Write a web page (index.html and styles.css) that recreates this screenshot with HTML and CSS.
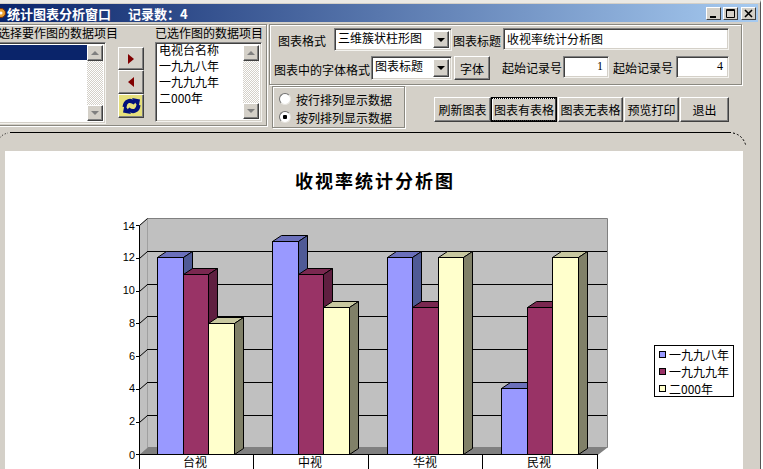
FILE: index.html
```html
<!DOCTYPE html>
<html lang="zh-CN">
<head>
    <meta charset="UTF-8">
    <title>统计图表分析窗口</title>
    <link rel="stylesheet" href="styles.css">
</head>
<body>
    <div id="window">
        <div id="titlebar">
            <svg class="app-icon" width="6" height="12" viewBox="0 0 6 12">
                <circle cx="1" cy="6" r="4.5" fill="#e8a030" stroke="#803000"/>
                <circle cx="1" cy="6" r="1.5" fill="#fff"/>
            </svg>
            <span class="title-text">统计图表分析窗口</span>
            <span class="title-count">记录数：4</span>
            <div class="win-btns">
                <div class="win-btn"><svg width="13" height="11" viewBox="0 0 13 11"><rect x="3" y="8" width="6" height="2"/></svg></div>
                <div class="win-btn"><svg width="13" height="11" viewBox="0 0 13 11"><path d="M2.5 1.5h8v8h-8z M2 2.5h9" fill="none" stroke="#000"/></svg></div>
                <div class="win-btn close-btn"><svg width="13" height="11" viewBox="0 0 13 11"><path d="M3 2l7 7M10 2l-7 7" stroke="#000" stroke-width="1.6"/></svg></div>
            </div>
        </div>

        <div id="toolbar">
            <div class="group left-group">
                <div class="list-col first-col">
                    <div class="field-label">选择要作图的数据项目</div>
                    <div class="listbox first-list">
                        <div class="list-items">
                            <div class="list-row selected"></div>
                        </div>
                        <div class="scrollbar">
                            <div class="scroll-btn"><i class="tri-up"></i></div>
                            <div class="scroll-btn"><i class="tri-down"></i></div>
                        </div>
                    </div>
                </div>

                <div class="move-btns">
                    <button class="btn move-btn"><i class="tri-right"></i></button>
                    <button class="btn move-btn tall"><i class="tri-left"></i></button>
                    <button class="btn move-btn tall swap-btn">
                        <svg width="19" height="16" viewBox="0 0 19 16">
                            <path d="M2.5 9C3 3 8 1 13 5" fill="none" stroke="#00107c" stroke-width="4"/>
                            <path d="M10 0l8 1.500-1.500 8z" fill="#00107c"/>
                            <path d="M16.500 7C16 13 11 15 6 11" fill="none" stroke="#00107c" stroke-width="4"/>
                            <path d="M9 16l-8-1.500 1.500-8z" fill="#00107c"/>
                        </svg>
                    </button>
                </div>

                <div class="list-col second-col">
                    <div class="field-label">已选作图的数据项目</div>
                    <div class="listbox second-list">
                        <div class="list-items">
                            <div class="list-row">电视台名称</div>
                            <div class="list-row">一九九八年</div>
                            <div class="list-row">一九九九年</div>
                            <div class="list-row">二000年</div>
                        </div>
                        <div class="scrollbar">
                            <div class="scroll-btn"><i class="tri-up"></i></div>
                            <div class="scroll-btn"><i class="tri-down"></i></div>
                        </div>
                    </div>
                </div>
            </div>

            <div class="right-col">
                <div class="group options-group">
                    <div class="opt-row">
                        <span class="opt-label l1">图表格式</span>
                        <div class="combo c1"><span class="combo-text">三维簇状柱形图</span><div class="combo-btn"><i class="tri-down black"></i></div></div>
                        <span class="opt-label l2">图表标题</span>
                        <div class="textbox t1">收视率统计分析图</div>
                    </div>
                    <div class="opt-row">
                        <span class="opt-label l3">图表中的字体格式</span>
                        <div class="combo c2"><span class="combo-text">图表标题</span><div class="combo-btn"><i class="tri-down black"></i></div></div>
                        <button class="btn font-btn">字体</button>
                        <span class="opt-label l4">起始记录号</span>
                        <div class="textbox num n1">1</div>
                        <span class="opt-label l5">起始记录号</span>
                        <div class="textbox num n2">4</div>
                    </div>
                </div>

                <div class="action-row">
                    <div class="group radio-group">
                        <label class="radio-line"><span class="radio"></span>按行排列显示数据</label>
                        <label class="radio-line"><span class="radio checked"></span>按列排列显示数据</label>
                    </div>
                    <div class="action-btns">
                        <button class="btn a1">刷新图表</button>
                        <button class="btn a2 focused"><span>图表有表格</span></button>
                        <button class="btn a3">图表无表格</button>
                        <button class="btn a4">预览打印</button>
                        <button class="btn a5">退出</button>
                    </div>
                </div>
            </div>
        </div>

        <div id="divider"></div>
        <svg id="corners" width="763" height="20" viewBox="0 0 763 20">
            <path d="M0 8.5Q3 5 8 4" fill="none" stroke="#000" stroke-dasharray="1 2"/>
            <path d="M733 4Q743 6 746 17" fill="none" stroke="#000" stroke-dasharray="2 2"/>
        </svg>

        <div id="sheet">
            <div id="chart-title">收视率统计分析图</div>
            <svg id="chart" width="738" height="278" viewBox="5 191 738 278">
                <!-- walls -->
                <polygon class="wall" points="147.5,218.5 607.5,218.5 607.5,447.5 147.5,447.5"/>
                <polygon class="wall" points="139.5,225.5 147.5,218.5 147.5,447.5 139.5,454.5"/>
                <polygon class="floor" points="139.5,454.5 147.5,447.5 607.5,447.5 598.5,454.5"/>

                <!-- grid lines -->
                <path class="grid" d="M147 251.5H607M147 284.5H607M147 316.5H607M147 349.5H607M147 382.5H607M147 415.5H607"/>
                <path class="grid soft" d="M136 225.5H139.5L147.5 218.5M136 258.5H139.5L147.5 251.5M136 291.5H139.5L147.5 284.5M136 323.5H139.5L147.5 316.5M136 356.5H139.5L147.5 349.5M136 389.5H139.5L147.5 382.5M136 422.5H139.5L147.5 415.5M136 454.5H139.5"/>

                <text class="axis-num" x="135" y="226">14</text>
                <text class="axis-num" x="135" y="257">12</text>
                <text class="axis-num" x="135" y="290">10</text>
                <text class="axis-num" x="135" y="323">8</text>
                <text class="axis-num" x="135" y="356">6</text>
                <text class="axis-num" x="135" y="388">4</text>
                <text class="axis-num" x="135" y="421">2</text>
                <text class="axis-num" x="135" y="455">0</text>

                <!-- 台视 -->
                <g class="s1">
                    <polygon class="top" points="157.5,257.5 166.5,251.5 192.5,251.5 183.5,257.5"/>
                    <polygon class="side" points="183.5,257.5 192.5,251.5 192.5,448.5 183.5,454.5"/>
                    <rect class="front" x="157.5" y="257.5" width="26" height="197"/>
                </g>
                <g class="s2">
                    <polygon class="top" points="183.5,274.5 192.5,268.5 217.5,268.5 208.5,274.5"/>
                    <polygon class="side" points="208.5,274.5 217.5,268.5 217.5,448.5 208.5,454.5"/>
                    <rect class="front" x="183.5" y="274.5" width="25" height="180"/>
                </g>
                <g class="s3">
                    <polygon class="top" points="208.5,323.5 217.5,317.5 243.5,317.5 234.5,323.5"/>
                    <polygon class="side" points="234.5,323.5 243.5,317.5 243.5,448.5 234.5,454.5"/>
                    <rect class="front" x="208.5" y="323.5" width="26" height="131"/>
                </g>

                <!-- 中视 -->
                <g class="s1">
                    <polygon class="top" points="272.5,241.5 281.5,235.5 307.5,235.5 298.5,241.5"/>
                    <polygon class="side" points="298.5,241.5 307.5,235.5 307.5,448.5 298.5,454.5"/>
                    <rect class="front" x="272.5" y="241.5" width="26" height="213"/>
                </g>
                <g class="s2">
                    <polygon class="top" points="298.5,274.5 307.5,268.5 332.5,268.5 323.5,274.5"/>
                    <polygon class="side" points="323.5,274.5 332.5,268.5 332.5,448.5 323.5,454.5"/>
                    <rect class="front" x="298.5" y="274.5" width="25" height="180"/>
                </g>
                <g class="s3">
                    <polygon class="top" points="323.5,307.5 332.5,301.5 358.5,301.5 349.5,307.5"/>
                    <polygon class="side" points="349.5,307.5 358.5,301.5 358.5,448.5 349.5,454.5"/>
                    <rect class="front" x="323.5" y="307.5" width="26" height="147"/>
                </g>

                <!-- 华视 -->
                <g class="s1">
                    <polygon class="top" points="387.5,257.5 396.5,251.5 421.5,251.5 412.5,257.5"/>
                    <polygon class="side" points="412.5,257.5 421.5,251.5 421.5,448.5 412.5,454.5"/>
                    <rect class="front" x="387.5" y="257.5" width="25" height="197"/>
                </g>
                <g class="s2">
                    <polygon class="top" points="412.5,307.5 421.5,301.5 447.5,301.5 438.5,307.5"/>
                    <polygon class="side" points="438.5,307.5 447.5,301.5 447.5,448.5 438.5,454.5"/>
                    <rect class="front" x="412.5" y="307.5" width="26" height="147"/>
                </g>
                <g class="s3">
                    <polygon class="top" points="438.5,257.5 447.5,251.5 472.5,251.5 463.5,257.5"/>
                    <polygon class="side" points="463.5,257.5 472.5,251.5 472.5,448.5 463.5,454.5"/>
                    <rect class="front" x="438.5" y="257.5" width="25" height="197"/>
                </g>

                <!-- 民视 -->
                <g class="s1">
                    <polygon class="top" points="501.5,388.5 510.5,382.5 536.5,382.5 527.5,388.5"/>
                    <polygon class="side" points="527.5,388.5 536.5,382.5 536.5,448.5 527.5,454.5"/>
                    <rect class="front" x="501.5" y="388.5" width="26" height="66"/>
                </g>
                <g class="s2">
                    <polygon class="top" points="527.5,307.5 536.5,301.5 561.5,301.5 552.5,307.5"/>
                    <polygon class="side" points="552.5,307.5 561.5,301.5 561.5,448.5 552.5,454.5"/>
                    <rect class="front" x="527.5" y="307.5" width="25" height="147"/>
                </g>
                <g class="s3">
                    <polygon class="top" points="552.5,257.5 561.5,251.5 587.5,251.5 578.5,257.5"/>
                    <polygon class="side" points="578.5,257.5 587.5,251.5 587.5,448.5 578.5,454.5"/>
                    <rect class="front" x="552.5" y="257.5" width="26" height="197"/>
                </g>

                <!-- axis and data table head -->
                <path class="grid" d="M139.5 225.5V469M139 454.5H598M253.5 454.5V469M368.5 454.5V469M482.5 454.5V469M597.5 454.5V469"/>
                <text class="cat" x="195" y="461.5">台视</text>
                <text class="cat" x="310" y="461.5">中视</text>
                <text class="cat" x="425" y="461.5">华视</text>
                <text class="cat" x="539" y="461.5">民视</text>

                <!-- legend -->
                <rect class="legend-box" x="654.5" y="345.5" width="79" height="51"/>
                <g class="s1"><rect class="front" x="659.5" y="351.5" width="6" height="6"/></g>
                <g class="s2"><rect class="front" x="659.5" y="368.5" width="6" height="6"/></g>
                <g class="s3"><rect class="front" x="659.5" y="385.5" width="6" height="6"/></g>
                <text class="legend-text" x="669" y="354.5">一九九八年</text>
                <text class="legend-text" x="669" y="371.5">一九九九年</text>
                <text class="legend-text" x="669" y="388.5">二000年</text>
            </svg>
        </div>
    </div>
</body>
</html>
```

FILE: styles.css
```css
html, body{
    margin: 0;
    height: 100%;
    overflow: hidden;
    background: #fff;
}
body, button{
    font-family: "Noto Sans CJK SC", "Liberation Sans", sans-serif;
    font-size: 12px;
    color: #000;
}
#window{
    position: relative;
    box-sizing: border-box;
    width: 761px;
    height: 469px;
    display: flex;
    flex-direction: column;
    background: #d4d0c8;
    border-top: 3px solid #ebe9e4;
    border-right: 1px solid #555;
    padding-top: 1px;
    overflow: hidden;
}

/* title bar */
#titlebar{
    flex: none;
    height: 18px;
    margin-right: 2px;
    display: flex;
    align-items: center;
    background: linear-gradient(90deg, #0a246a, #a6caf0);
    color: #fff;
    font-weight: bold;
    font-size: 13px;
}
.title-text{
    margin-left: 1px;
}
.title-count{
    margin-left: 17px;
}
.win-btns{
    margin-left: auto;
    margin-right: 2px;
    display: flex;
    gap: 2px;
}
.win-btn{
    box-sizing: border-box;
    width: 15px;
    height: 13px;
    background: #d4d0c8;
    border: 1px solid;
    border-color: #fff #404040 #404040 #fff;
    display: flex;
}
.close-btn{
    margin-left: 1px;
}

/* shared bevels */
.group{
    box-sizing: border-box;
    border: 1px solid #8a8880;
    box-shadow: 1px 1px 0 #fff, inset 1px 1px 0 #fff;
}
.btn, .scroll-btn, .combo-btn{
    box-sizing: border-box;
    background: #d4d0c8;
    border: 1px solid;
    border-color: #fff #404040 #404040 #fff;
    box-shadow: inset -1px -1px 0 #808080;
    padding: 0;
    display: flex;
    align-items: center;
    justify-content: center;
}
.listbox, .combo, .textbox{
    box-sizing: border-box;
    background: #fff;
    border: 1px solid;
    border-color: #808080 #f4f3ef #f4f3ef #808080;
    box-shadow: inset 1px 1px 0 #404040, inset -1px -1px 0 #d4d0c8;
}

/* small triangles */
i{
    display: block;
    width: 0;
    height: 0;
    border: solid transparent;
}
.tri-up{
    border-width: 0 4px 4px;
    border-bottom-color: #808080;
}
.tri-down{
    border-width: 4px 4px 0;
    border-top-color: #808080;
}
.tri-down.black{
    border-top-color: #000;
}
.tri-right{
    border-width: 5px 0 5px 6px;
    border-left-color: #800000;
}
.tri-left{
    border-width: 5px 6px 5px 0;
    border-right-color: #800000;
}

/* top panel */
#toolbar{
    flex: none;
    display: flex;
    height: 104px;
    margin-top: 2px;
}
.left-group{
    flex: none;
    display: flex;
    width: 271px;
    height: 102px;
    margin-left: -4px;
}
.field-label{
    height: 17px;
    line-height: 16px;
    white-space: nowrap;
}
.first-col{
    width: 109px;
}
.first-col .field-label{
    margin-left: 1px;
}
.second-col{
    width: 107px;
    margin-left: 11px;
}
.listbox{
    display: flex;
    padding: 2px;
}
.first-list{
    height: 82px;
}
.second-list{
    height: 80px;
}
.list-items{
    flex: 1;
    min-width: 0;
}
.second-list .list-items{
    margin-top: -3px;
}
.list-row{
    height: 16px;
    line-height: 15px;
    padding-left: 1px;
    white-space: nowrap;
}
.list-row.selected{
    height: 15px;
    background: #0a246a;
}
.scrollbar{
    flex: none;
    width: 16px;
    display: flex;
    flex-direction: column;
    justify-content: space-between;
    background: repeating-conic-gradient(#d4d0c8 0 25%, #fff 0 50%) 0 0 / 2px 2px;
}
.scroll-btn{
    height: 16px;
}
.move-btns{
    width: 26px;
    margin: 22px 0 0 12px;
}
.move-btn{
    width: 26px;
    height: 23px;
}
.move-btn.tall{
    height: 24px;
}
.swap-btn{
    background: #e6e07c;
}

.right-col{
    flex: none;
    width: 473px;
    margin-left: 2px;
}
.options-group{
    height: 61px;
    padding-top: 3px;
}
.opt-row{
    display: flex;
    height: 23px;
    margin-bottom: 5px;
    white-space: nowrap;
}
.opt-label{
    line-height: 23px;
}
.l1{ margin: 1px 8px 0; width: 48px; }
.l2{ margin: 1px 0 0 1px; width: 48px; }
.l3{ margin: 2px 0 0 4px; width: 96px; }
.l4{ margin-left: 12px; width: 60px; }
.l5{ margin-left: 4px; width: 60px; }

.combo{
    display: flex;
    padding: 2px;
    height: 23px;
}
.c1{ width: 118px; }
.c2{ width: 81px; margin-left: 1px; height: 24px; }
.combo-text{
    flex: 1;
    padding-left: 1px;
    line-height: 14px;
}
.combo-btn{
    flex: none;
    width: 16px;
}
.font-btn{
    width: 36px;
    height: 24px;
    margin-left: 2px;
}
.textbox{
    height: 22px;
    line-height: 17px;
    padding: 1px 3px;
}
.t1{ width: 226px; margin-left: 2px; }
.num{
    text-align: right;
    padding-right: 5px;
    font-family: "Liberation Serif", serif;
}
.n1{ width: 46px; margin-left: 1px; }
.n2{ width: 53px; margin-left: 3px; }

.action-row{
    display: flex;
    margin-top: 1px;
}
.radio-group{
    width: 133px;
    height: 42px;
    margin-left: 3px;
    padding: 3px 0 0 6px;
}
.radio-line{
    display: flex;
    align-items: center;
    height: 18px;
    white-space: nowrap;
}
.radio{
    box-sizing: border-box;
    width: 12px;
    height: 12px;
    margin-right: 5px;
    border-radius: 50%;
    background: #fff;
    border: 1px solid;
    border-color: #707070 #e8e6e0 #e8e6e0 #707070;
}
.radio.checked{
    background: radial-gradient(circle, #000 0 2px, #fff 2.5px);
}
.action-btns{
    display: flex;
    height: 25px;
    margin: 11px 0 0 29px;
}
.action-btns .btn{
    height: 25px;
    white-space: nowrap;
}
.a1{ width: 57px; }
.a2{ width: 66px; }
.a3{ width: 65px; margin-left: 1px; }
.a4{ width: 55px; margin-left: 1px; }
.a5{ width: 49px; margin-left: 1px; }
.focused{
    outline: 1px solid #000;
    outline-offset: -1px;
    border-color: #000;
    box-shadow: inset -1px -1px 0 #404040, inset 1px 1px 0 #fff;
}
.focused span{
    padding: 1px;
    outline: 1px dotted #000;
    outline-offset: 1px;
}

/* line above the sheet */
#divider{
    flex: none;
    width: 721px;
    height: 1px;
    margin: 4px 0 0 10px;
    background: #000;
}
#corners{
    position: absolute;
    left: 0;
    top: 126px;
}

/* chart sheet */
#sheet{
    flex: 1;
    width: 738px;
    margin: 18px 0 0 5px;
    background: #fff;
}
#chart-title{
    height: 40px;
    line-height: 58px;
    text-align: center;
    font-size: 18px;
    font-weight: bold;
    letter-spacing: 2px;
    margin-left: 2px;
}
#chart{
    display: block;
}
.wall{
    fill: #c0c0c0;
}
.floor{
    fill: #808080;
}
.wall:first-child{
    stroke: #808080;
}
.grid{
    fill: none;
    stroke: #000;
    stroke-width: 1;
}
.axis-num{
    font-family: "Liberation Sans", sans-serif;
    font-size: 11px;
    text-anchor: end;
    dominant-baseline: central;
}
.cat{
    font-size: 12px;
    text-anchor: middle;
    dominant-baseline: central;
}
.legend-box{
    fill: #fff;
    stroke: #000;
}
.legend-text{
    font-size: 12px;
    dominant-baseline: central;
}
.front, .top, .side{
    stroke: #000;
    stroke-width: 1;
}
.s1 .front{ fill: #9999ff; }
.s1 .top{ fill: #6b70bb; }
.s1 .side{ fill: #4f5a96; }
.s2 .front{ fill: #993366; }
.s2 .top{ fill: #7a2850; }
.s2 .side{ fill: #5f1f40; }
.s3 .front{ fill: #ffffcc; }
.s3 .top{ fill: #c8c8a0; }
.s3 .side{ fill: #808068; }
```
